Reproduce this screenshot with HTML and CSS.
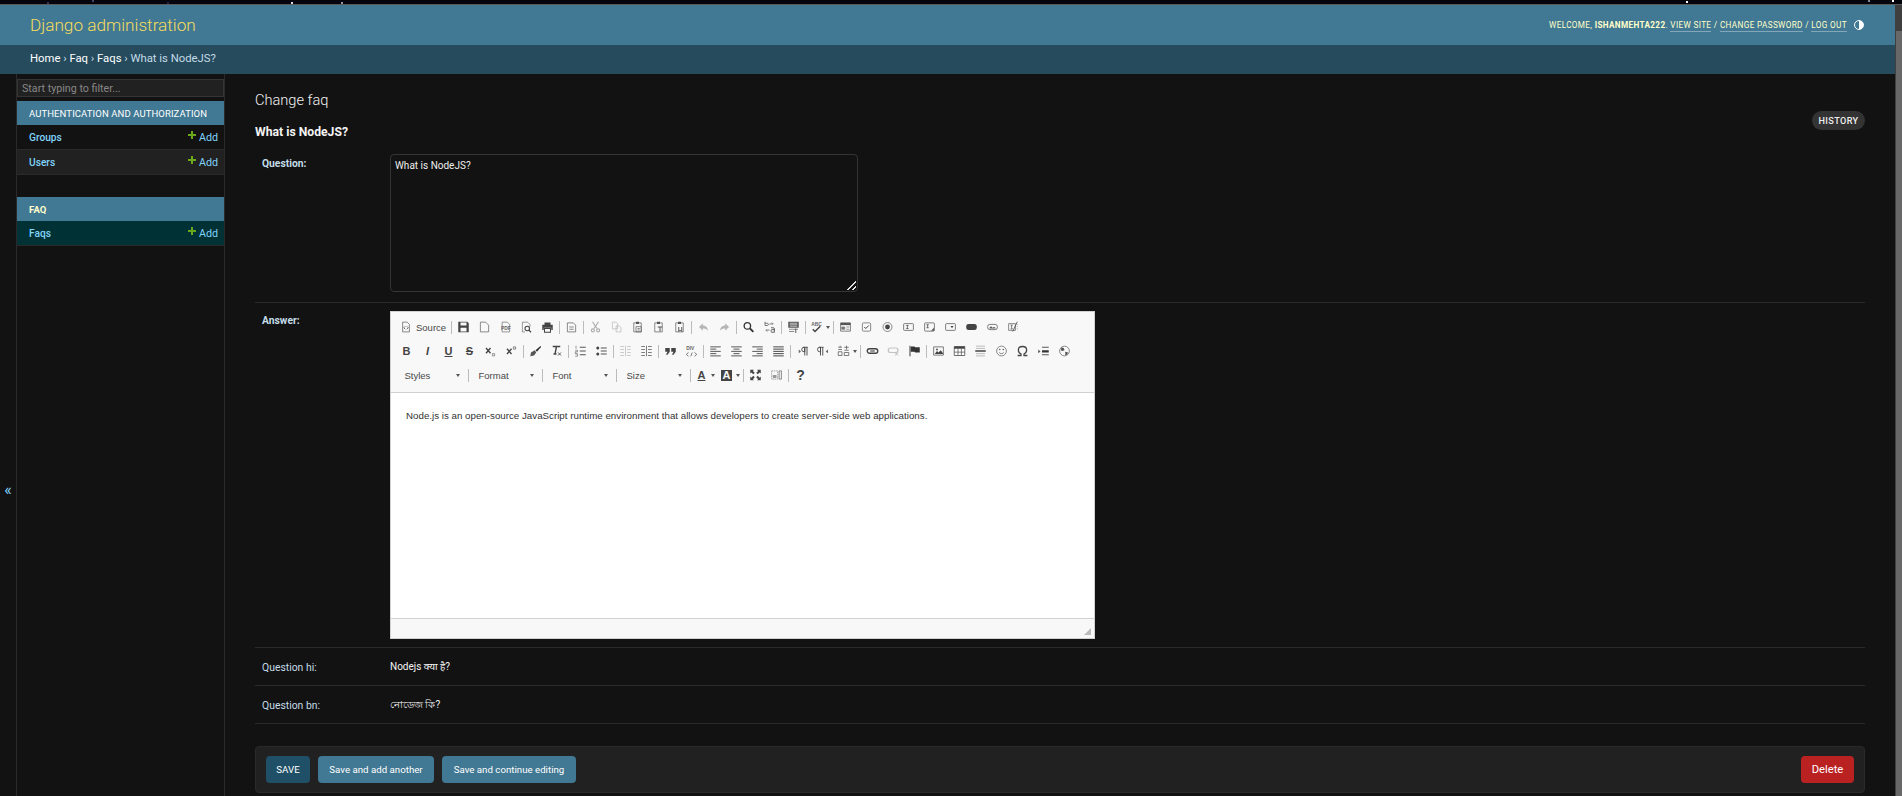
FILE: index.html
```html
<!DOCTYPE html>
<html lang="en">
<head>
  <meta charset="UTF-8" />
  <title>Change faq | Django site admin</title>
  <link rel="stylesheet" href="styles.css">
</head>
<body>

<svg class="defs" width="0" height="0">
  <symbol id="i-source" viewBox="0 0 16 16"><path d="M3.5 1.5h6l3 3v10h-9z" fill="none" stroke="#666"/><path d="M7 7l-2 2 2 2M9 7l2 2-2 2" fill="none" stroke="#444"/></symbol>
  <symbol id="i-save" viewBox="0 0 16 16"><path d="M1 1h12l2 2v12H1z" fill="#444"/><path d="M4 2h8v4H4z" fill="#f8f8f8"/><path d="M4 9h8v5H4z" fill="#f8f8f8"/></symbol>
  <symbol id="i-new" viewBox="0 0 16 16"><path d="M2.5 1.5h7l4 4v9h-11z" fill="none" stroke="#666"/></symbol>
  <symbol id="i-preview" viewBox="0 0 16 16"><path d="M6 14.5H2.5v-13h7l3 3V8" fill="none" stroke="#777"/><circle cx="9" cy="10" r="3" fill="none" stroke="#444" stroke-width="1.4"/><path d="M11 12l3 3" stroke="#444" stroke-width="1.6"/></symbol>
  <symbol id="i-print" viewBox="0 0 16 16"><path d="M4 2h8v3H4zM1 5h14v7h-2V9H3v3H1z" fill="#444"/><path d="M4 10h8v5H4z" fill="none" stroke="#444" stroke-width="1.4"/></symbol>
  <symbol id="i-templates" viewBox="0 0 16 16"><path d="M2.5 2.5h8l3 3v9h-11z" fill="none" stroke="#666"/><path d="M5 8h6M5 11h6" stroke="#666"/></symbol>
  <symbol id="i-cut" viewBox="0 0 16 16"><path d="M4 1l6 9M12 1l-6 9" stroke="#aaa" stroke-width="1.5"/><circle cx="4.5" cy="12.5" r="2" fill="none" stroke="#aaa" stroke-width="1.4"/><circle cx="11.5" cy="12.5" r="2" fill="none" stroke="#aaa" stroke-width="1.4"/></symbol>
  <symbol id="i-copy" viewBox="0 0 16 16"><path d="M2.5 1.5h5l2 2v7h-7zM7.5 6.5h4l2.5 2.5v5.5H7.5z" fill="#f8f8f8" stroke="#bbb"/></symbol>
  <symbol id="i-paste" viewBox="0 0 16 16"><path d="M3 2.5h10v12H3z" fill="none" stroke="#666"/><path d="M6 1h4v3H6z" fill="#555"/><path d="M6 7.5h7v7H6z" fill="none" stroke="#666"/><path d="M8 10h3M8 12h3" stroke="#666"/></symbol>
  <symbol id="i-pastet" viewBox="0 0 16 16"><path d="M3 2.5h10v12H3z" fill="none" stroke="#666"/><path d="M6 1h4v3H6z" fill="#555"/><path d="M7 8h6M10 8v6" stroke="#555" stroke-width="1.3"/></symbol>
  <symbol id="i-pastew" viewBox="0 0 16 16"><path d="M3 2.5h10v12H3z" fill="none" stroke="#666"/><path d="M6 1h4v3H6z" fill="#555"/><path d="M7 8v6l2-2 2 2V8" fill="none" stroke="#555" stroke-width="1.3"/></symbol>
  <symbol id="i-undo" viewBox="0 0 16 16"><path d="M7 3L2 8l5 5V10c3 0 5 .5 7 3 0-4-3-7-7-7z" fill="#b5b5b5"/></symbol>
  <symbol id="i-redo" viewBox="0 0 16 16"><path d="M9 3l5 5-5 5V10c-3 0-5 .5-7 3 0-4 3-7 7-7z" fill="#b5b5b5"/></symbol>
  <symbol id="i-find" viewBox="0 0 16 16"><circle cx="6.5" cy="6.5" r="4.3" fill="none" stroke="#333" stroke-width="1.8"/><path d="M10 10l4.5 4.5" stroke="#333" stroke-width="2.4"/></symbol>
  <symbol id="i-replace" viewBox="0 0 16 16"><path d="M2 1v5h3a1.5 1.5 0 000-3H2" fill="none" stroke="#555"/><path d="M8 4h5l-2-2M8 12H3l2 2" fill="none" stroke="#555"/><path d="M10 9h3a1.5 1.5 0 011.5 1.5V15H11a2 2 0 010-3.5h3.5" fill="none" stroke="#333"/></symbol>
  <symbol id="i-selectall" viewBox="0 0 16 16"><path d="M1 1h14v8H1z" fill="#555"/><path d="M3 3h10M3 5h10M3 7h10" stroke="#ddd"/><path d="M2 11h12M2 14h7" stroke="#666"/><path d="M11 10v6" stroke="#333"/></symbol>
  <symbol id="i-form" viewBox="0 0 16 16"><path d="M1.5 2.5h13v11h-13z" fill="none" stroke="#555"/><path d="M1.5 2.5h13v3h-13z" fill="#555"/><path d="M3 8h4v3H3zM9 8h4M9 11h4" fill="#777" stroke="#777"/></symbol>
  <symbol id="i-check" viewBox="0 0 16 16"><rect x="2.5" y="2.5" width="11" height="11" rx="1.5" fill="none" stroke="#666"/><path d="M5 8l2 2 4-4" fill="none" stroke="#444" stroke-width="1.3"/></symbol>
  <symbol id="i-radio" viewBox="0 0 16 16"><circle cx="8" cy="8" r="6" fill="none" stroke="#666"/><circle cx="8" cy="8" r="3.2" fill="#444"/></symbol>
  <symbol id="i-text" viewBox="0 0 16 16"><rect x="1.5" y="3.5" width="13" height="9" rx="1" fill="none" stroke="#555"/><path d="M5 6h3M5 10h3M6.5 6v4" stroke="#444"/></symbol>
  <symbol id="i-area" viewBox="0 0 16 16"><rect x="1.5" y="2.5" width="13" height="11" rx="1" fill="none" stroke="#555"/><path d="M4 5h3M4 9h3M5.5 5v4" stroke="#444"/><path d="M14 9l-4 4h4z" fill="#555"/></symbol>
  <symbol id="i-select" viewBox="0 0 16 16"><rect x="1.5" y="3.5" width="13" height="9" rx="1" fill="none" stroke="#555"/><path d="M8 6.5h4L10 9.5z" fill="#444"/></symbol>
  <symbol id="i-button" viewBox="0 0 16 16"><rect x="1" y="4" width="14" height="8" rx="3" fill="#444"/></symbol>
  <symbol id="i-imgbtn" viewBox="0 0 16 16"><rect x="1.5" y="4.5" width="13" height="7" rx="3" fill="none" stroke="#555"/><path d="M4 9l2-2 2 2 2-1 2 1v1H4z" fill="#555"/></symbol>
  <symbol id="i-hidden" viewBox="0 0 16 16"><path d="M1.5 3.5h9v9h-9z" fill="none" stroke="#666"/><path d="M4 5.5h3M4 10.5h3M5.5 5.5v5" stroke="#555"/><path d="M7 14l6-13" stroke="#555" stroke-width="1.2"/><path d="M13 4v1M13 7v1M13 10v1" stroke="#777"/></symbol>
  <symbol id="i-sub" viewBox="0 0 16 16"><path d="M2 4l6 7M8 4l-6 7" stroke="#444" stroke-width="1.8"/><path d="M10.5 11.5h3v3h-3z" fill="none" stroke="#777"/></symbol>
  <symbol id="i-sup" viewBox="0 0 16 16"><path d="M2 5l6 7M8 5l-6 7" stroke="#444" stroke-width="1.8"/><path d="M10.5 2.5h3v3h-3z" fill="none" stroke="#666"/></symbol>
  <symbol id="i-brush" viewBox="0 0 16 16"><path d="M15 1L8 7l2 2 5-6z" fill="#333"/><path d="M7 7L2 10l-1 5 5-1 3-4z" fill="#555"/></symbol>
  <symbol id="i-clear" viewBox="0 0 16 16"><path d="M3 2h10M8 2L6 12M4 12h4" fill="none" stroke="#444" stroke-width="1.8"/><path d="M10 10l4 4M14 10l-4 4" stroke="#555" stroke-width="1.3"/></symbol>
  <symbol id="i-ol" viewBox="0 0 16 16"><path d="M7 3h8M7 8h8M7 13h8" stroke="#555" stroke-width="1.4"/><path d="M2 1v4M1 7h3v2H1v2h3M1 12h3v3H1" fill="none" stroke="#777"/></symbol>
  <symbol id="i-ul" viewBox="0 0 16 16"><path d="M7 4h8M7 8h8M7 12h8" stroke="#555" stroke-width="1.4"/><circle cx="3" cy="4" r="2" fill="#444"/><circle cx="3" cy="12" r="2" fill="#444"/></symbol>
  <symbol id="i-outdent" viewBox="0 0 16 16"><path d="M1 2h5M1 6h5M1 10h5M1 14h5M10 2h5M10 6h5M10 10h5M10 14h5M8 1v14" stroke="#bbb"/></symbol>
  <symbol id="i-indent" viewBox="0 0 16 16"><path d="M1 2h5M1 6h5M1 10h5M1 14h5M10 2h5M10 6h5M10 10h5M10 14h5M8 1v14" stroke="#555"/></symbol>
  <symbol id="i-quote" viewBox="0 0 16 16"><path d="M1 4h6v5l-3 4H2l2-4H1zM9 4h6v5l-3 4h-2l2-4H9z" fill="#444"/></symbol>
  <symbol id="i-left" viewBox="0 0 16 16"><path d="M1 2.5h14M1 5.5h8M1 8.5h14M1 11.5h8M1 14.5h14" stroke="#555" stroke-width="1.3"/></symbol>
  <symbol id="i-center" viewBox="0 0 16 16"><path d="M1 2.5h14M4 5.5h8M1 8.5h14M4 11.5h8M1 14.5h14" stroke="#555" stroke-width="1.3"/></symbol>
  <symbol id="i-right" viewBox="0 0 16 16"><path d="M1 2.5h14M7 5.5h8M1 8.5h14M7 11.5h8M1 14.5h14" stroke="#555" stroke-width="1.3"/></symbol>
  <symbol id="i-justify" viewBox="0 0 16 16"><path d="M1 2.5h14M1 5.5h14M1 8.5h14M1 11.5h14M1 14.5h14" stroke="#444" stroke-width="1.3"/></symbol>
  <symbol id="i-ltr" viewBox="0 0 16 16"><path d="M9 3h6M10 3a2.5 2.5 0 000 6h1V3v11M14 3v11" fill="none" stroke="#444" stroke-width="1.2"/><path d="M3 6l3 2.5L3 11z" fill="#666"/></symbol>
  <symbol id="i-rtl" viewBox="0 0 16 16"><path d="M2 3h6M3 3a2.5 2.5 0 000 6h1V3v11M7 3v11" fill="none" stroke="#444" stroke-width="1.2"/><path d="M14 6l-3 2.5 3 2.5z" fill="#666"/></symbol>
  <symbol id="i-lang" viewBox="0 0 16 16"><path d="M1 3h5M1 6h5M1 9h5v5H1zM3.5 1v2M9 3h6M12 1v5M9 7h6M9 10h6v4H9z" fill="none" stroke="#555"/></symbol>
  <symbol id="i-link" viewBox="0 0 16 16"><rect x="1" y="5" width="14" height="6" rx="3" fill="none" stroke="#444" stroke-width="1.8"/><path d="M5 8h6" stroke="#444" stroke-width="1.5"/></symbol>
  <symbol id="i-unlink" viewBox="0 0 16 16"><rect x="1" y="4" width="13" height="6" rx="3" fill="none" stroke="#c4c4c4" stroke-width="1.6"/><path d="M10 10l4 4M14 10l-4 4" stroke="#bbb" stroke-width="1.3"/></symbol>
  <symbol id="i-flag" viewBox="0 0 16 16"><path d="M2 1v14" stroke="#444" stroke-width="1.4"/><path d="M3 2h5l1 1h6v7H9L8 9H3z" fill="#333"/></symbol>
  <symbol id="i-image" viewBox="0 0 16 16"><path d="M1.5 2.5h13v11h-13z" fill="none" stroke="#555"/><path d="M3 12l3-4 2 2 3-3 3 4v1z" fill="#444"/><circle cx="6" cy="6" r="1.3" fill="#555"/></symbol>
  <symbol id="i-table" viewBox="0 0 16 16"><path d="M1 2h14v12H1z" fill="#fff" stroke="#444"/><path d="M1 2h14v3H1z" fill="#444"/><path d="M1 9.5h14M6 5v9M10.5 5v9" stroke="#555"/></symbol>
  <symbol id="i-hr" viewBox="0 0 16 16"><path d="M2 1.5h12M2 4.5h12M2 11.5h12M2 14.5h12" stroke="#aaa"/><path d="M1 8h14" stroke="#444" stroke-width="2"/></symbol>
  <symbol id="i-smile" viewBox="0 0 16 16"><circle cx="8" cy="8" r="6.5" fill="none" stroke="#666"/><circle cx="5.7" cy="6" r="1" fill="#555"/><circle cx="10.3" cy="6" r="1" fill="#555"/><path d="M5 10c1.5 2 4.5 2 6 0" fill="none" stroke="#555"/></symbol>
  <symbol id="i-omega" viewBox="0 0 16 16"><path d="M1.5 14H6v-2c-2-1-3.5-3-3.5-5.5C2.5 3.5 5 2 8 2s5.5 1.5 5.5 4.5c0 2.5-1.5 4.5-3.5 5.5v2h4.5" fill="none" stroke="#444" stroke-width="1.7"/></symbol>
  <symbol id="i-pagebreak" viewBox="0 0 16 16"><path d="M6 3h9M6 13h9" stroke="#555" stroke-width="1.3"/><path d="M6 7h9v3H6z" fill="#333"/><path d="M1 6l3 2.5L1 11z" fill="#555"/></symbol>
  <symbol id="i-globe" viewBox="0 0 16 16"><circle cx="8" cy="8" r="6.5" fill="none" stroke="#666"/><path d="M4 3l3 1 1 3-3 1-2-1zM9 9l4 1-2 3-2 1z" fill="#555"/></symbol>
  <symbol id="i-max" viewBox="0 0 16 16"><path d="M1 1h5L4.5 2.5 7 5 5 7 2.5 4.5 1 6zM15 1v5l-1.5-1.5L11 7 9 5l2.5-2.5L10 1zM1 15v-5l1.5 1.5L5 9l2 2-2.500 2.500L6 15zM15 15h-5l1.500-1.500L9 11l2-2 2.500 2.500L15 10z" fill="#444"/></symbol>
  <symbol id="i-blocks" viewBox="0 0 16 16"><path d="M1.5 2.5h8v11h-8z" fill="none" stroke="#888" stroke-dasharray="2 1"/><path d="M11.5 2.5h3v11h-3z" fill="none" stroke="#666"/><path d="M3 8h5v4H3z" fill="#999"/></symbol>
</svg>

<div class="shot-strip"></div>
<div class="fake-scroll"><div class="fake-thumb"></div></div>

<div class="page">
  <header class="top-bar">
    <div class="branding">Django administration</div>
    <div class="user-tools">
      <span>Welcome, <strong>ishanmehta222</strong>. <a href="#">View site</a> / <a href="#">Change password</a> / <a href="#">Log out</a></span>
      <span class="theme-toggle"></span>
    </div>
  </header>
  <div class="breadcrumbs">
    <a href="#">Home</a> › <a href="#">Faq</a> › <a href="#">Faqs</a> › What is NodeJS?
  </div>

  <div class="main">
    <div class="toggle-nav">«</div>
    <nav class="sidebar">
      <input class="nav-filter" placeholder="Start typing to filter...">
      <div class="module">
        <div class="module-head"><a href="#">Authentication and Authorization</a></div>
        <div class="module-row"><a href="#">Groups</a><a class="add-link" href="#">Add</a></div>
        <div class="module-row alt"><a href="#">Users</a><a class="add-link" href="#">Add</a></div>
      </div>
      <div class="module">
        <div class="module-head current"><a href="#">Faq</a></div>
        <div class="module-row selected"><a href="#">Faqs</a><a class="add-link" href="#">Add</a></div>
      </div>
    </nav>

    <main class="content">
      <h1>Change faq</h1>
      <div class="title-row">
        <h2>What is NodeJS?</h2>
        <a class="history-link" href="#">History</a>
      </div>

      <div class="form-row row-question">
        <label class="required">Question:</label>
        <div class="question-wrap">
          <textarea class="question-box">What is NodeJS?</textarea>
        </div>
      </div>

      <div class="form-row row-answer">
        <label class="required">Answer:</label>
        <div class="editor">
          <div class="editor-toolbar">
            <div class="tool-row">
              <span class="tool-source"><svg class="ico"><use href="#i-source"/></svg><span>Source</span></span><i class="sep"></i>
              <svg class="ico"><use href="#i-save"/></svg><svg class="ico"><use href="#i-new"/></svg><svg class="ico" viewBox="0 0 16 16"><path d="M3.5 1.5h7l3 3v10h-10z" fill="none" stroke="#777"/><text x="2" y="12" class="ico-label">PDF</text></svg><svg class="ico"><use href="#i-preview"/></svg><svg class="ico"><use href="#i-print"/></svg><i class="sep"></i>
              <svg class="ico"><use href="#i-templates"/></svg><i class="sep"></i>
              <svg class="ico"><use href="#i-cut"/></svg><svg class="ico"><use href="#i-copy"/></svg><svg class="ico"><use href="#i-paste"/></svg><svg class="ico"><use href="#i-pastet"/></svg><svg class="ico"><use href="#i-pastew"/></svg><i class="sep"></i>
              <svg class="ico"><use href="#i-undo"/></svg><svg class="ico"><use href="#i-redo"/></svg><i class="sep"></i>
              <svg class="ico"><use href="#i-find"/></svg><svg class="ico"><use href="#i-replace"/></svg><i class="sep"></i>
              <svg class="ico"><use href="#i-selectall"/></svg><i class="sep"></i>
              <svg class="ico with-arrow" viewBox="0 0 16 16"><text x="1" y="7" class="ico-label">ABC</text><path d="M3 11l3 3 7-7" fill="none" stroke="#444" stroke-width="2"/></svg><b class="arrow"></b><i class="sep"></i>
              <svg class="ico"><use href="#i-form"/></svg><svg class="ico"><use href="#i-check"/></svg><svg class="ico"><use href="#i-radio"/></svg><svg class="ico"><use href="#i-text"/></svg><svg class="ico"><use href="#i-area"/></svg><svg class="ico"><use href="#i-select"/></svg><svg class="ico"><use href="#i-button"/></svg><svg class="ico"><use href="#i-imgbtn"/></svg><svg class="ico"><use href="#i-hidden"/></svg>
            </div>
            <div class="tool-row">
              <span class="glyph">B</span><span class="glyph italic">I</span><span class="glyph underline">U</span><span class="glyph strike">S</span><svg class="ico"><use href="#i-sub"/></svg><svg class="ico"><use href="#i-sup"/></svg><i class="sep"></i>
              <svg class="ico"><use href="#i-brush"/></svg><svg class="ico"><use href="#i-clear"/></svg><i class="sep"></i>
              <svg class="ico"><use href="#i-ol"/></svg><svg class="ico"><use href="#i-ul"/></svg><i class="sep"></i>
              <svg class="ico"><use href="#i-outdent"/></svg><svg class="ico"><use href="#i-indent"/></svg><i class="sep"></i>
              <svg class="ico"><use href="#i-quote"/></svg><svg class="ico" viewBox="0 0 16 16"><text x="1" y="7" class="ico-label">DIV</text><path d="M4 10l-3 2.5L4 15M12 10l3 2.5-3 2.5M7 15l2-5" fill="none" stroke="#555"/></svg><i class="sep"></i>
              <svg class="ico"><use href="#i-left"/></svg><svg class="ico"><use href="#i-center"/></svg><svg class="ico"><use href="#i-right"/></svg><svg class="ico"><use href="#i-justify"/></svg><i class="sep"></i>
              <svg class="ico"><use href="#i-ltr"/></svg><svg class="ico"><use href="#i-rtl"/></svg><svg class="ico with-arrow"><use href="#i-lang"/></svg><b class="arrow"></b><i class="sep"></i>
              <svg class="ico"><use href="#i-link"/></svg><svg class="ico"><use href="#i-unlink"/></svg><svg class="ico"><use href="#i-flag"/></svg><i class="sep"></i>
              <svg class="ico"><use href="#i-image"/></svg><svg class="ico"><use href="#i-table"/></svg><svg class="ico"><use href="#i-hr"/></svg><svg class="ico"><use href="#i-smile"/></svg><svg class="ico"><use href="#i-omega"/></svg><svg class="ico"><use href="#i-pagebreak"/></svg><svg class="ico"><use href="#i-globe"/></svg>
            </div>
            <div class="tool-row">
              <span class="combo">Styles<b class="arrow"></b></span><i class="sep"></i>
              <span class="combo">Format<b class="arrow"></b></span><i class="sep"></i>
              <span class="combo">Font<b class="arrow"></b></span><i class="sep"></i>
              <span class="combo">Size<b class="arrow"></b></span><i class="sep"></i>
              <span class="glyph color-a with-arrow">A</span><b class="arrow"></b><span class="glyph with-arrow"><span class="color-b">A</span></span><b class="arrow"></b><i class="sep"></i>
              <svg class="ico"><use href="#i-max"/></svg><svg class="ico"><use href="#i-blocks"/></svg><i class="sep"></i>
              <span class="glyph help">?</span>
            </div>
          </div>
          <div class="editor-body">
            <p>Node.js is an open-source JavaScript runtime environment that allows developers to create server-side web applications.</p>
          </div>
          <div class="editor-foot"><span class="resizer"></span></div>
        </div>
      </div>

      <div class="form-row row-plain">
        <label>Question hi:</label>
        <div class="readonly">Nodejs क्या है?</div>
      </div>
      <div class="form-row row-plain">
        <label>Question bn:</label>
        <div class="readonly">নোডেজ কি?</div>
      </div>

      <div class="submit-row">
        <a class="btn btn-default" href="#">Save</a>
        <a class="btn" href="#">Save and add another</a>
        <a class="btn" href="#">Save and continue editing</a>
        <a class="btn btn-delete" href="#">Delete</a>
      </div>
    </main>
  </div>
</div>

</body>
</html>
```

FILE: styles.css
```css
* {
  margin: 0; padding: 0; box-sizing: border-box;
}

html, body {
  height: 796px;
  overflow: hidden;
}

body {
  font-family: Roboto, "Open Sans", "Noto Sans", "DejaVu Sans", sans-serif;
  font-size: 11px;
  background: #121212;
  color: #eee;
  display: flex;
  flex-direction: column;
}

a {
  text-decoration: none;
  color: inherit;
}

.defs {
  position: absolute;
}

/* the dark strip of desktop captured above the browser page */
.shot-strip {
  height: 5px;
  border-bottom: 1px solid #5a5a5a;
  background-color: #04040c;
  background-repeat: no-repeat;
  background-size: 2px 2px;
  background-image:
    linear-gradient(#dde, #dde), linear-gradient(#99a, #99a), linear-gradient(#335, #335),
    linear-gradient(#446, #446), linear-gradient(#224, #224), linear-gradient(#fff, #fff),
    linear-gradient(#889, #889), linear-gradient(#fff, #fff);
  background-position: 291px 2px, 341px 2px, 47px 2px, 92px 0, 167px 2px, 1686px 1px, 1868px 0, 1892px 0;
}

.fake-scroll {
  position: fixed;
  right: 0;
  top: 5px;
  bottom: 0;
  width: 7px;
  background: #3f3f3f;
}

.fake-thumb {
  height: 100%;
  margin-top: 26px;
  margin-left: 1px;
  background: #686868;
}

.page {
  flex: 1;
  display: flex;
  flex-direction: column;
  margin-right: 7px;
  min-height: 0;
}

.top-bar {
  height: 40px;
  background: #417893;
  display: flex;
  align-items: center;
  justify-content: space-between;
  padding: 0 30px;
}

.branding {
  font-size: 17.2px;
  font-weight: 300;
  color: #f5dd5d;
}

.user-tools {
  font-size: 8.2px;
  letter-spacing: 0.35px;
  text-transform: uppercase;
  color: #ffc;
  display: flex;
  align-items: center;
}

.user-tools a {
  border-bottom: 1px solid rgba(255, 255, 255, 0.35);
  padding-bottom: 1px;
}

.theme-toggle {
  width: 10px;
  height: 10px;
  border-radius: 50%;
  margin-left: 7px;
  margin-right: 1px;
  border: 1px solid #fff;
  background: linear-gradient(90deg, #417893 50%, #fff 50%);
}

.breadcrumbs {
  height: 29px;
  line-height: 28px;
  background: #264b5d;
  padding: 0 30px;
  font-size: 11.3px;
  color: #c4dce8;
}

.breadcrumbs a {
  color: #fff;
}

.main {
  flex: 1;
  display: flex;
  min-height: 0;
}

.toggle-nav {
  width: 16px;
  display: flex;
  align-items: center;
  justify-content: center;
  font-size: 16px;
  color: #81d4fa;
  padding-top: 108px;
}

.sidebar {
  width: 209px;
  border-left: 1px solid #2a2a2a;
  border-right: 1px solid #2a2a2a;
  padding-top: 5px;
}

.nav-filter {
  display: block;
  width: 100%;
  height: 18px;
  background: #212121;
  border: 1px solid #353535;
  color: #eee;
  font: 10.7px Roboto, sans-serif;
  padding: 0 4px;
  margin-bottom: 4px;
}

.nav-filter::placeholder {
  color: #888;
}

.module {
  margin-bottom: 22px;
}

.module-head {
  height: 24px;
  background: #417893;
  color: #fff;
  font-size: 9.5px;
  font-weight: 400;
  letter-spacing: 0.1px;
  text-transform: uppercase;
  white-space: nowrap;
  display: flex;
  align-items: center;
  padding: 0 12px;
}

.module-head.current {
  font-weight: 700;
  color: #ffc;
}

.module-row {
  height: 25px;
  background: #121212;
  border-bottom: 1px solid #2a2a2a;
  display: flex;
  align-items: center;
  justify-content: space-between;
  padding: 0 6px 0 12px;
  color: #81d4fa;
  font-size: 10.2px;
  font-weight: 500;
}

.module-row.alt {
  background: #212121;
}

.module-row.selected {
  background: #003135;
}

.add-link {
  font-size: 10.7px;
  font-weight: 400;
  display: flex;
  align-items: center;
  gap: 3px;
}

.add-link::before {
  content: "";
  width: 8px;
  height: 8px;
  margin-top: -4px;
  background:
    linear-gradient(#6ca81e, #6ca81e) center / 8px 2px no-repeat,
    linear-gradient(#6ca81e, #6ca81e) center / 2px 8px no-repeat;
}

.content {
  flex: 1;
  min-width: 0;
  padding: 16px 30px 0;
  display: flex;
  flex-direction: column;
}

h1 {
  font-size: 14.6px;
  font-weight: 300;
  color: #f4f4f4;
  line-height: 20px;
}

.title-row {
  display: flex;
  justify-content: space-between;
  align-items: flex-start;
  height: 43px;
  margin-top: 1px;
}

h2 {
  font-size: 12.2px;
  line-height: 16px;
  font-weight: 700;
  color: #f4f4f4;
  margin-top: 13px;
}

.history-link {
  background: #333;
  color: #eee;
  font-size: 9.1px;
  font-weight: 500;
  letter-spacing: 0.4px;
  text-transform: uppercase;
  height: 19px;
  width: 53px;
  border-radius: 10px;
  display: flex;
  align-items: center;
  justify-content: center;
}

.form-row {
  display: flex;
  border-bottom: 1px solid #2a2a2a;
  padding: 8px 7px;
}

.form-row label {
  width: 128px;
  flex-shrink: 0;
  font-size: 10.4px;
  color: #c4dce8;
  padding-top: 3px;
}

.form-row label.required {
  font-size: 10.3px;
  font-weight: 700;
}

.row-question {
  height: 149px;
  padding-top: 0;
}

.question-wrap {
  position: relative;
  width: 468px;
  height: 138px;
}

.question-wrap::after {
  content: "";
  position: absolute;
  right: 2px;
  bottom: 2px;
  width: 9px;
  height: 9px;
  background: linear-gradient(135deg, transparent 48%, #ddd 48% 60%, transparent 60% 74%, #ddd 74% 86%, transparent 86%);
}

.question-box {
  display: block;
  width: 100%;
  height: 100%;
  resize: none;
  background: #121212;
  border: 1px solid #353535;
  border-radius: 4px;
  color: #eee;
  font: 400 10px Roboto, sans-serif;
  padding: 5px 4px;
}

.row-answer {
  height: 345px;
}

.editor {
  width: 705px;
  height: 328px;
  background: #fff;
  border: 1px solid #d1d1d1;
  display: flex;
  flex-direction: column;
  color: #333;
}

.editor-toolbar {
  height: 81px;
  background: #f8f8f8;
  border-bottom: 1px solid #d1d1d1;
  padding: 3px 0 0 5px;
}

.tool-row {
  height: 24px;
  display: flex;
  align-items: center;
}

.ico {
  width: 21px;
  height: 12px;
  flex-shrink: 0;
}

.ico-label {
  font: 700 6.5px "Liberation Sans", Arial, sans-serif;
  fill: #666;
}

.ico.with-arrow,
.glyph.with-arrow {
  width: 19px;
}

.tool-source {
  display: flex;
  align-items: center;
  font: 9.5px "Liberation Sans", Arial, sans-serif;
  color: #474747;
  width: 54px;
  flex-shrink: 0;
}

.tool-source .ico {
  width: 20px;
}

.sep {
  width: 1px;
  height: 13px;
  margin: 0 1px;
  background: #bcbcbc;
  flex-shrink: 0;
}

.arrow {
  width: 0;
  height: 0;
  flex-shrink: 0;
  border-left: 2.5px solid transparent;
  border-right: 2.5px solid transparent;
  border-top: 3px solid #555;
  margin-right: 2px;
}

.glyph {
  width: 21px;
  text-align: center;
  font: 700 11px "Liberation Sans", Arial, sans-serif;
  color: #444;
  flex-shrink: 0;
}

.italic { font-style: italic; }
.underline { text-decoration: underline; }
.strike { text-decoration: line-through; }

.color-a {
  text-decoration: underline;
}

.color-b {
  display: inline-block;
  width: 11px;
  line-height: 11px;
  background: #444;
  color: #f8f8f8;
}

.help {
  font-size: 14px;
}

.combo {
  width: 71px;
  padding: 0 7px 0 8.5px;
  flex-shrink: 0;
  display: flex;
  align-items: center;
  justify-content: space-between;
  font: 9.5px "Liberation Sans", Arial, sans-serif;
  color: #484848;
}

.combo .arrow {
  margin-right: 0;
}

.editor-body {
  flex: 1;
  padding: 17px 15px;
  font: 9.75px "Liberation Sans", Arial, sans-serif;
  color: #333;
}

.editor-foot {
  height: 20px;
  background: #f8f8f8;
  border-top: 1px solid #d1d1d1;
  display: flex;
  justify-content: flex-end;
  align-items: flex-end;
  padding: 0 3px 3px 0;
}

.resizer {
  width: 0;
  height: 0;
  border-left: 7px solid transparent;
  border-bottom: 7px solid #bbb;
}

.row-plain {
  height: 38px;
  padding-top: 10px;
}

.row-plain label {
  font-weight: 400;
}

.readonly {
  font-size: 10px;
  font-weight: 400;
  color: #f4f4f4;
  padding-top: 1px;
}

.submit-row {
  margin-top: 22px;
  height: 47px;
  background: #212121;
  border: 1px solid #2a2a2a;
  border-radius: 4px;
  padding: 9px 10px;
  display: flex;
  gap: 8px;
}

.btn {
  height: 27px;
  width: 116px;
  background: #417893;
  color: #fff;
  border-radius: 4px;
  font-size: 9.7px;
  display: flex;
  align-items: center;
  justify-content: center;
}

.btn:nth-child(3) {
  width: 134px;
}

.btn-default {
  width: 44px;
  background: #205067;
  text-transform: uppercase;
}

.btn-delete {
  width: 53px;
  margin-left: auto;
  background: #ba2121;
  font-size: 11.2px;
}
```
